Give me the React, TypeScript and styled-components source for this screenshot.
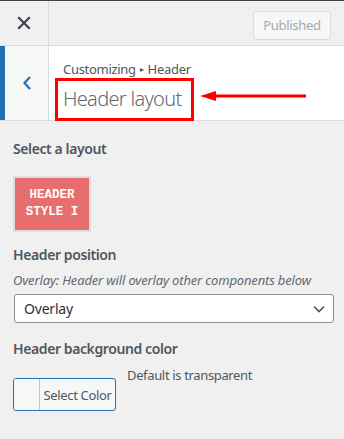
import styled, { createGlobalStyle } from "styled-components";

const GlobalStyle = createGlobalStyle`
  html, body {
    margin: 0;
    padding: 0;
    background: #f0f0f1;
    font-family: "Noto Sans", "Open Sans", sans-serif;
    color: #50575e;
  }
  * {
    box-sizing: border-box;
  }
`;

export default function App() {
  return (
    <>
      <GlobalStyle />
      <Panel>
        <TopBar>
          <CloseButton aria-label="Close">
            <svg width="14" height="14" viewBox="0 0 14 14">
              <path
                d="M2 2 L12 12 M12 2 L2 12"
                stroke="#3c434a"
                strokeWidth="2.2"
                strokeLinecap="square"
              />
            </svg>
          </CloseButton>
          <Spacer />
          <PublishedButton disabled>Published</PublishedButton>
        </TopBar>

        <SectionHeader>
          <BackButton aria-label="Back">
            <svg width="10" height="16" viewBox="0 0 10 16">
              <path
                d="M8 2 L2.5 8 L8 14"
                fill="none"
                stroke="#2271b1"
                strokeWidth="2.2"
              />
            </svg>
          </BackButton>
          <TitleArea>
            <Breadcrumb>
              Customizing <Caret>▸</Caret> Header
            </Breadcrumb>
            <Title>Header layout</Title>
            <Highlight />
            <Arrow width="110" height="12" viewBox="0 0 110 12">
              <path d="M0 6 L16 1 L16 11 Z" fill="#f00" />
              <path d="M14 6 L106 6" stroke="#f00" strokeWidth="3" />
            </Arrow>
          </TitleArea>
        </SectionHeader>

        <Content>
          <Label>Select a layout</Label>
          <LayoutOption>
            HEADER
            <br />
            STYLE I
          </LayoutOption>

          <Label $top={13}>Header position</Label>
          <Description>Overlay: Header will overlay other components below</Description>
          <Select>
            <span>Overlay</span>
            <svg width="12" height="8" viewBox="0 0 12 8">
              <path d="M1 1.5 L6 6.5 L11 1.5" fill="none" stroke="#50575e" strokeWidth="1.6" />
            </svg>
          </Select>

          <Label $top={16}>Header background color</Label>
          <ColorRow>
            <ColorButton>
              <Swatch />
              <ColorText>Select Color</ColorText>
            </ColorButton>
            <DefaultNote>Default is transparent</DefaultNote>
          </ColorRow>
        </Content>
      </Panel>
    </>
  );
}

const Panel = styled.div`
  width: 344px;
  min-height: 439px;
  background: #f0f0f1;
`;

const TopBar = styled.div`
  display: flex;
  align-items: center;
  height: 46px;
  border-top: 1px solid #3c434a;
  border-bottom: 1px solid #dcdcde;
  background: #f0f0f1;
`;

const CloseButton = styled.div`
  display: flex;
  align-items: center;
  justify-content: center;
  width: 49px;
  height: 100%;
  border-right: 1px solid #dcdcde;
`;

const Spacer = styled.div`
  flex: 1;
`;

const PublishedButton = styled.button`
  height: 29px;
  width: 78px;
  margin-right: 13px;
  margin-top: 4px;
  padding: 0;
  background: #f6f7f7;
  border: 1px solid #dcdcde;
  border-radius: 3px;
  color: #a7aaad;
  font-family: inherit;
  font-size: 13px;
  letter-spacing: -0.3px;
`;

const SectionHeader = styled.div`
  display: flex;
  height: 75px;
  background: #fff;
  border-bottom: 1px solid #dcdcde;
`;

const BackButton = styled.div`
  display: flex;
  align-items: center;
  justify-content: center;
  width: 49px;
  background: #f6f7f7;
  border-left: 5px solid #2271b1;
  border-right: 1px solid #dcdcde;
`;

const TitleArea = styled.div`
  position: relative;
  flex: 1;
  padding: 13px 0 0 14px;
`;

const Breadcrumb = styled.div`
  font-size: 13px;
  line-height: 20px;
  letter-spacing: -0.3px;
  color: #50575e;
`;

const Caret = styled.span`
  font-size: 8px;
  position: relative;
  top: -2px;
  margin: 0 1px;
`;

const Title = styled.div`
  font-size: 20px;
  font-weight: 300;
  line-height: 30px;
  letter-spacing: -0.7px;
  margin-top: 3px;
  color: #646970;
`;

const Highlight = styled.div`
  position: absolute;
  left: 6px;
  top: 32px;
  width: 139px;
  height: 43px;
  border: 3px solid #f00;
`;

const Arrow = styled.svg`
  position: absolute;
  left: 151px;
  top: 44px;
`;

const Content = styled.div`
  padding: 12px 13px 20px 13px;
`;

const Label = styled.div<{ $top?: number }>`
  font-size: 14px;
  font-weight: 600;
  line-height: 20px;
  letter-spacing: -0.4px;
  margin-top: ${({ $top }) => $top ?? 6}px;
  color: #50575e;
`;

const LayoutOption = styled.div`
  display: flex;
  flex-direction: column;
  justify-content: center;
  align-items: center;
  margin-top: 17px;
  width: 78px;
  height: 56px;
  background: #e66e6e;
  border: 2px solid #dcdcde;
  color: #fff;
  font-family: "Courier New", "Liberation Mono", monospace;
  font-weight: 700;
  font-size: 12.5px;
  line-height: 17px;
  text-align: center;
`;

const Description = styled.div`
  font-size: 13px;
  font-style: italic;
  line-height: 18px;
  letter-spacing: -0.16px;
  margin-top: 6px;
  color: #646970;
`;

const Select = styled.div`
  display: flex;
  align-items: center;
  justify-content: space-between;
  margin-top: 5px;
  margin-left: 1px;
  width: 320px;
  height: 29px;
  padding: 0 8px 0 9px;
  background: #fff;
  border: 1px solid #8c8f94;
  border-radius: 3px;
  font-size: 14px;
  letter-spacing: -0.2px;
  color: #2c3338;
`;

const ColorRow = styled.div`
  display: flex;
  align-items: flex-start;
  margin-top: 7px;
`;

const ColorButton = styled.div`
  display: flex;
  margin-top: 12px;
  width: 103px;
  height: 33px;
  border: 1px solid #2271b1;
  border-radius: 3px;
  background: #f6f7f7;
  overflow: hidden;
`;

const Swatch = styled.div`
  width: 26px;
  border-right: 1px solid #c3c4c7;
  background: #f6f7f7;
`;

const ColorText = styled.div`
  flex: 1;
  display: flex;
  align-items: center;
  justify-content: center;
  font-size: 13px;
  letter-spacing: -0.35px;
  color: #50575e;
`;

const DefaultNote = styled.div`
  margin-left: 11px;
  font-size: 13px;
  line-height: 18px;
  letter-spacing: -0.35px;
  color: #50575e;
`;
